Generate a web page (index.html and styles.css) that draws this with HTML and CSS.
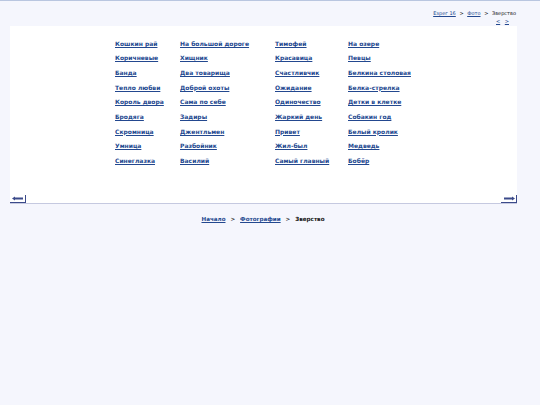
FILE: index.html
```html
<!DOCTYPE html>
<html lang="ru">
<head>
    <meta charset="UTF-8">
    <title>Зверство</title>
    <link rel="stylesheet" href="styles.css">
</head>
<body>
    <div class="top">
        <div class="crumbs">
            <a href="#">Езрег 16</a> <span class="sep">&gt;</span>
            <a href="#">Фото</a> <span class="sep">&gt;</span>
            <span class="here">Зверство</span>
        </div>
        <div class="pager">
            <a href="#">&lt;</a> <a href="#">&gt;</a>
        </div>
    </div>

    <div class="panel">
        <div class="albums">
            <a href="#">Кошкин рай</a>
            <a href="#">На большой дороге</a>
            <a href="#">Тимофей</a>
            <a href="#">На озере</a>

            <a href="#">Коричневые</a>
            <a href="#">Хищник</a>
            <a href="#">Красавица</a>
            <a href="#">Певцы</a>

            <a href="#">Банда</a>
            <a href="#">Два товарища</a>
            <a href="#">Счастливчик</a>
            <a href="#">Белкина столовая</a>

            <a href="#">Тепло любви</a>
            <a href="#">Доброй охоты</a>
            <a href="#">Ожидание</a>
            <a href="#">Белка-стрелка</a>

            <a href="#">Король двора</a>
            <a href="#">Сама по себе</a>
            <a href="#">Одиночество</a>
            <a href="#">Детки в клетке</a>

            <a href="#">Бродяга</a>
            <a href="#">Задиры</a>
            <a href="#">Жаркий день</a>
            <a href="#">Собакин год</a>

            <a href="#">Скромница</a>
            <a href="#">Джентльмен</a>
            <a href="#">Привет</a>
            <a href="#">Белый кролик</a>

            <a href="#">Умница</a>
            <a href="#">Разбойник</a>
            <a href="#">Жил-был</a>
            <a href="#">Медведь</a>

            <a href="#">Синеглазка</a>
            <a href="#">Василий</a>
            <a href="#">Самый главный</a>
            <a href="#">Бобёр</a>
        </div>

        <div class="arrows">
            <a href="#" class="arrow">
                <svg width="12" height="5" viewBox="0 0 12 5"><path d="M0 2.5 L3 0.5 L3 1.5 L11 1.5 L11 3.5 L3 3.5 L3 4.5 Z" fill="#3b4a8a"/></svg>
            </a>
            <a href="#" class="arrow">
                <svg width="12" height="5" viewBox="0 0 12 5"><path d="M12 2.5 L9 0.5 L9 1.5 L1 1.5 L1 3.5 L9 3.5 L9 4.5 Z" fill="#3b4a8a"/></svg>
            </a>
        </div>
    </div>

    <div class="bottom-crumbs">
        <a href="#">Начало</a> <span class="sep">&gt;</span>
        <a href="#">Фотографии</a> <span class="sep">&gt;</span>
        <span class="here">Зверство</span>
    </div>
</body>
</html>
```

FILE: styles.css
```css
body {
    margin: 0;
    background: #f5f6fd;
    border-top: 1px solid #b9c6e0;
    font-family: "DejaVu Sans", Verdana, sans-serif;
    font-size: 5px;
    color: #111;
    min-height: 404px;
}

a {
    color: #23488f;
    text-decoration: underline;
}

.top {
    padding: 8px 24px 0 0;
    text-align: right;
    height: 17px;
}

.crumbs {
    line-height: 8px;
}

.crumbs .sep {
    margin: 0 2px;
}

.pager {
    line-height: 8px;
    padding-right: 7px;
}

.pager a {
    margin-left: 3px;
}

.panel {
    margin-left: 10px;
    width: 507px;
    height: 177px;
    background: #fff;
    border-bottom: 1px solid #c5c9e0;
    display: flex;
    flex-direction: column;
    justify-content: space-between;
}

.albums {
    display: grid;
    grid-template-columns: 65px 95px 73px auto;
    grid-auto-rows: 14.65px;
    align-items: center;
    padding: 10px 0 0 105px;
    font-size: 6px;
    font-weight: bold;
}

.albums a {
    white-space: nowrap;
}

.arrows {
    display: flex;
    justify-content: space-between;
}

.arrow {
    width: 15px;
    height: 7px;
    border-right: 1px solid #3b4a8a;
    border-bottom: 1px solid #3b4a8a;
    display: flex;
    align-items: center;
    justify-content: center;
}

.bottom-crumbs {
    margin-top: 11px;
    text-align: center;
    padding-right: 14px;
    font-size: 5.6px;
    font-weight: bold;
    line-height: 9px;
}

.bottom-crumbs .sep {
    margin: 0 3px;
}
```
